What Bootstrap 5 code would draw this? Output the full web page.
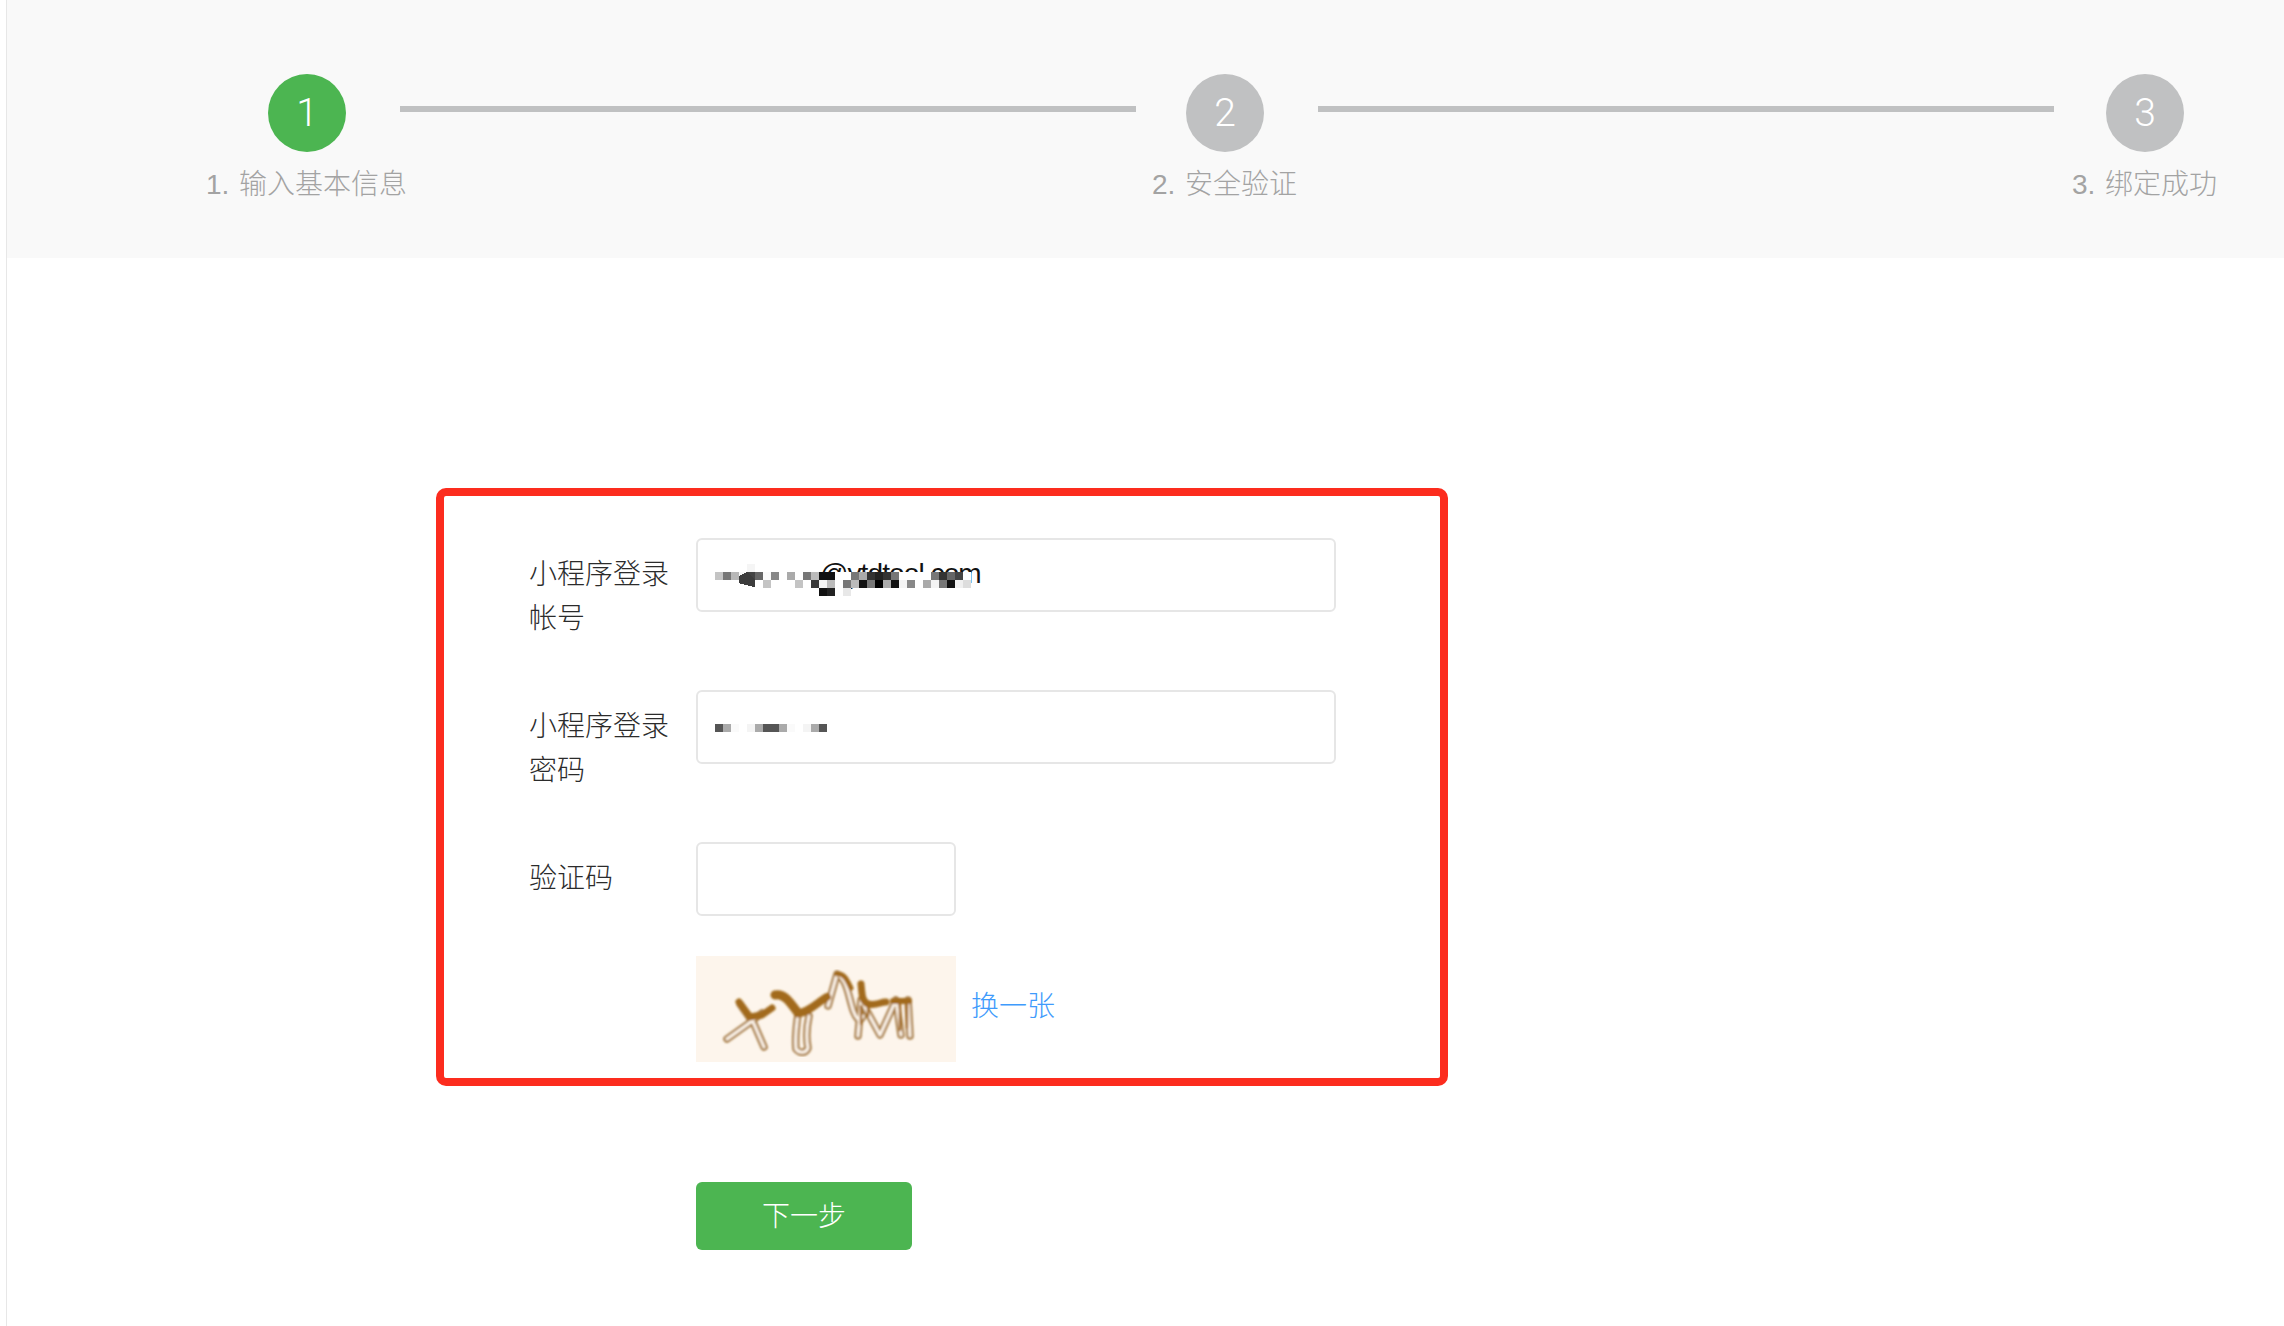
<!DOCTYPE html>
<html lang="zh-CN">
<head>
<meta charset="utf-8">
<title>输入基本信息</title>
<link href="https://cdn.jsdelivr.net/npm/bootstrap@5.3.0/dist/css/bootstrap.min.css" rel="stylesheet">
<style>
html,body{background:#fff;overflow:hidden}
body{font-family:"Liberation Sans","Noto Sans CJK SC",sans-serif;font-weight:300;font-size:28px;line-height:44px;color:#2b2b2b}
.page-shell{margin-left:6px;border-left:1px solid #e7e7e7;min-height:1326px}
.step-band{background:#f9f9f9;height:258px;padding:74px 0 0 261px}
.step-item{width:78px}
.step-dot{width:78px;height:78px;background:#c0c1c2;color:#fff;font-family:Roboto,sans-serif;font-weight:300;font-size:39px;line-height:1}
.step-dot-on{background:#4cb551}
.step-name{white-space:nowrap;color:#a3a3a3;margin:11px 1px 0 0;word-spacing:2px}
.step-rule{height:6px;background:#c0c1c2;width:736px;margin-top:32px}
.rule-a{margin-left:54px;margin-right:50px}
.rule-b{margin-left:54px;margin-right:52px}
.note-frame{width:1012px;margin:230px 0 0 429px;border:8px solid #fc2c1e;border-radius:10px;padding:42px 0 16px 85px}
.field-row{margin-bottom:40px}
.field-label{width:167px;padding:15px 20px 9px 0;color:#2b2b2b;font-size:28px;line-height:44px;margin:0;flex:none}
.field-wrap{width:640px}
.field-short{width:260px}
.form-control.field-input{height:74px;border:2px solid #e6e6e6;border-radius:6px;font-family:"Liberation Sans",sans-serif;font-size:28px;letter-spacing:-.9px;color:#111;box-shadow:none;padding:0 16px}
.form-control.field-mail{padding-left:122px;padding-bottom:3px}
.mosaic{position:absolute;left:19px;top:26px;pointer-events:none}
.mosaic-pw{top:34px}
.captcha-box{width:260px;height:106px;background:#fdf5ec;display:block}
.swap-link{color:#3f9bfc;text-decoration:none;margin:0 0 4px 15px}
.next-btn{display:block;margin:96px 0 0 689px;width:216px;height:68px;background:#4cb551;border:0;border-radius:6px;color:#fff;font-size:28px;font-weight:300;line-height:44px;padding:2px 0 0}
.next-btn:hover{background:#4cb551;color:#fff}
.captcha-row{margin-left:167px}
</style>
</head>
<body>
<div class="page-shell">
  <div class="step-band d-flex align-items-start">
    <div class="step-item d-flex flex-column align-items-center">
      <div class="step-dot step-dot-on rounded-circle d-flex align-items-center justify-content-center">1</div>
      <div class="step-name">1. 输入基本信息</div>
    </div>
    <div class="step-rule rule-a"></div>
    <div class="step-item d-flex flex-column align-items-center">
      <div class="step-dot rounded-circle d-flex align-items-center justify-content-center">2</div>
      <div class="step-name">2. 安全验证</div>
    </div>
    <div class="step-rule rule-b"></div>
    <div class="step-item d-flex flex-column align-items-center">
      <div class="step-dot rounded-circle d-flex align-items-center justify-content-center">3</div>
      <div class="step-name">3. 绑定成功</div>
    </div>
  </div>

  <form onsubmit="return false">
    <div class="note-frame">
      <div class="field-row d-flex align-items-start">
        <label class="field-label" for="acct">小程序登录帐号</label>
        <div class="field-wrap position-relative">
          <input id="acct" class="form-control field-input field-mail" type="text" value="@ytdtool.com">
          <svg class="mosaic" width="256" height="32" viewBox="0 0 32 4" shape-rendering="crispEdges" aria-hidden="true">
            <rect x="4" y="0" width="1" height="1" fill="#f5f5f5"/>
            <rect x="0" y="1" width="32" height="2" fill="#fff"/>
            <rect x="0" y="1" width="1" height="1" fill="#c4c4c4"/><rect x="1" y="1" width="1" height="1" fill="#777"/><rect x="2" y="1" width="1" height="1" fill="#b8b8b8"/><rect x="3" y="1" width="1" height="1" fill="#f8f8f8"/><rect x="4" y="1" width="1" height="1" fill="#444"/><rect x="5" y="1" width="1" height="1" fill="#666"/><rect x="6" y="1" width="1" height="1" fill="#fafafa"/><rect x="7" y="1" width="1" height="1" fill="#888"/><rect x="9" y="1" width="1" height="1" fill="#aaa"/><rect x="11" y="1" width="1" height="1" fill="#777"/><rect x="12" y="1" width="1" height="1" fill="#bbb"/><rect x="13" y="1" width="1" height="1" fill="#111"/><rect x="14" y="1" width="1" height="1" fill="#111"/><rect x="17" y="1" width="1" height="1" fill="#777"/><rect x="18" y="1" width="1" height="1" fill="#aaa"/><rect x="19" y="1" width="1" height="1" fill="#333"/><rect x="20" y="1" width="1" height="1" fill="#222"/><rect x="21" y="1" width="1" height="1" fill="#333"/><rect x="22" y="1" width="1" height="1" fill="#777"/><rect x="27" y="1" width="1" height="1" fill="#777"/><rect x="28" y="1" width="1" height="1" fill="#333"/><rect x="29" y="1" width="1" height="1" fill="#666"/><rect x="30" y="1" width="1" height="1" fill="#444"/>
            <polygon points="3,1.5 4,1 5,2 5,2.9 3,2.4" fill="#3d3d3d"/>
            <rect x="6" y="2" width="1" height="1" fill="#c4c4c4"/><rect x="10" y="2" width="1" height="1" fill="#c4c4c4"/><rect x="12" y="2" width="1" height="1" fill="#3a3a3a"/><rect x="13" y="2" width="1" height="1" fill="#f4f4f4"/><rect x="14" y="2" width="1" height="1" fill="#bbb"/><rect x="16" y="2" width="1" height="1" fill="#777"/><rect x="17" y="2" width="1" height="1" fill="#bbb"/><rect x="18" y="2" width="1" height="1" fill="#111"/><rect x="19" y="2" width="1" height="1" fill="#777"/><rect x="20" y="2" width="1" height="1" fill="#000"/><rect x="21" y="2" width="1" height="1" fill="#aaa"/><rect x="22" y="2" width="1" height="1" fill="#111"/><rect x="23" y="2" width="1" height="1" fill="#f4f4f4"/><rect x="24" y="2" width="1" height="1" fill="#888"/><rect x="26" y="2" width="1" height="1" fill="#aaa"/><rect x="27" y="2" width="1" height="1" fill="#f4f4f4"/><rect x="28" y="2" width="1" height="1" fill="#777"/><rect x="29" y="2" width="1" height="1" fill="#111"/><rect x="30" y="2" width="1" height="1" fill="#f0f0f0"/><rect x="31" y="2" width="1" height="1" fill="#ddd"/>
            <rect x="13" y="3" width="1" height="1" fill="#111"/><rect x="14" y="3" width="1" height="1" fill="#222"/><rect x="16" y="3" width="1" height="1" fill="#e8e8e8"/>
          </svg>
        </div>
      </div>
      <div class="field-row d-flex align-items-start">
        <label class="field-label" for="pass">小程序登录密码</label>
        <div class="field-wrap position-relative">
          <input id="pass" class="form-control field-input" type="text" value="">
          <svg class="mosaic mosaic-pw" width="112" height="8" viewBox="0 0 14 1" shape-rendering="crispEdges" aria-hidden="true">
            <rect x="0" width="1" height="1" fill="#555"/><rect x="1" width="1" height="1" fill="#aaa"/><rect x="2" width="1" height="1" fill="#fafafa"/><rect x="4" width="1" height="1" fill="#f4f4f4"/><rect x="5" width="1" height="1" fill="#aaa"/><rect x="6" width="1" height="1" fill="#555"/><rect x="7" width="1" height="1" fill="#555"/><rect x="8" width="1" height="1" fill="#aaa"/><rect x="9" width="1" height="1" fill="#fafafa"/><rect x="11" width="1" height="1" fill="#f4f4f4"/><rect x="12" width="1" height="1" fill="#aaa"/><rect x="13" width="1" height="1" fill="#555"/>
          </svg>
        </div>
      </div>
      <div class="field-row d-flex align-items-start">
        <label class="field-label" for="code">验证码</label>
        <div class="field-short">
          <input id="code" class="form-control field-input" type="text" value="">
        </div>
      </div>
      <div class="captcha-row d-flex align-items-center">
        <svg class="captcha-box" viewBox="0 0 260 106" aria-label="验证码图片" role="img">
          <defs><filter id="soft" x="-5%" y="-5%" width="110%" height="110%"><feGaussianBlur stdDeviation="0.8"/></filter></defs>
          <g fill="none" stroke-linecap="round" stroke-linejoin="round" filter="url(#soft)">
            <g stroke="#a97f47" stroke-width="7.5">
              <path d="M31 83L52 68 66 57M44 48L58 68 68 91"/>
              <path d="M102 58C100 72 99 84 100 93 104 98 110 97 112 92 110 82 110 74 113 60"/>
              <path d="M132 50L141 18C151 24 152 38 157 54 160 62 164 68 167 60"/>
              <path d="M162 80L165 44 184 79 200 44 205 79M214 80L212 44"/>
            </g>
            <g stroke="#fdf5ec" stroke-width="3">
              <path d="M31 83L52 68 66 57M44 48L58 68 68 91"/>
              <path d="M102 58C100 72 99 84 100 93 104 98 110 97 112 92 110 82 110 74 113 60"/>
              <path d="M132 50L141 18C151 24 152 38 157 54 160 62 164 68 167 60"/>
              <path d="M162 80L165 44 184 79 200 44 205 79M214 80L212 44"/>
            </g>
            <g stroke="#a26a1c">
              <path stroke-width="7" d="M43 46L54 61 66 59 76 52"/>
              <path stroke-width="9" d="M79 39C88 37 94 46 102 57"/>
              <path stroke-width="8" d="M102 57C112 57 122 46 131 41"/>
              <path stroke-width="5" d="M141 18C148 17 151 24 155 32"/>
              <path stroke-width="7" d="M165 28C166 38 166 46 172 48 180 50 184 46 190 46"/>
              <path stroke-width="6" d="M197 45H213"/>
              <path stroke-width="2.5" d="M204 46V74M211 46V72M165 50V68M172 50V60"/>
            </g>
          </g>
        </svg>
        <a class="swap-link" href="#">换一张</a>
      </div>
    </div>
    <button class="btn next-btn" type="button">下一步</button>
  </form>
</div>
<script src="https://cdn.jsdelivr.net/npm/bootstrap@5.3.0/dist/js/bootstrap.bundle.min.js"></script>
</body>
</html>
